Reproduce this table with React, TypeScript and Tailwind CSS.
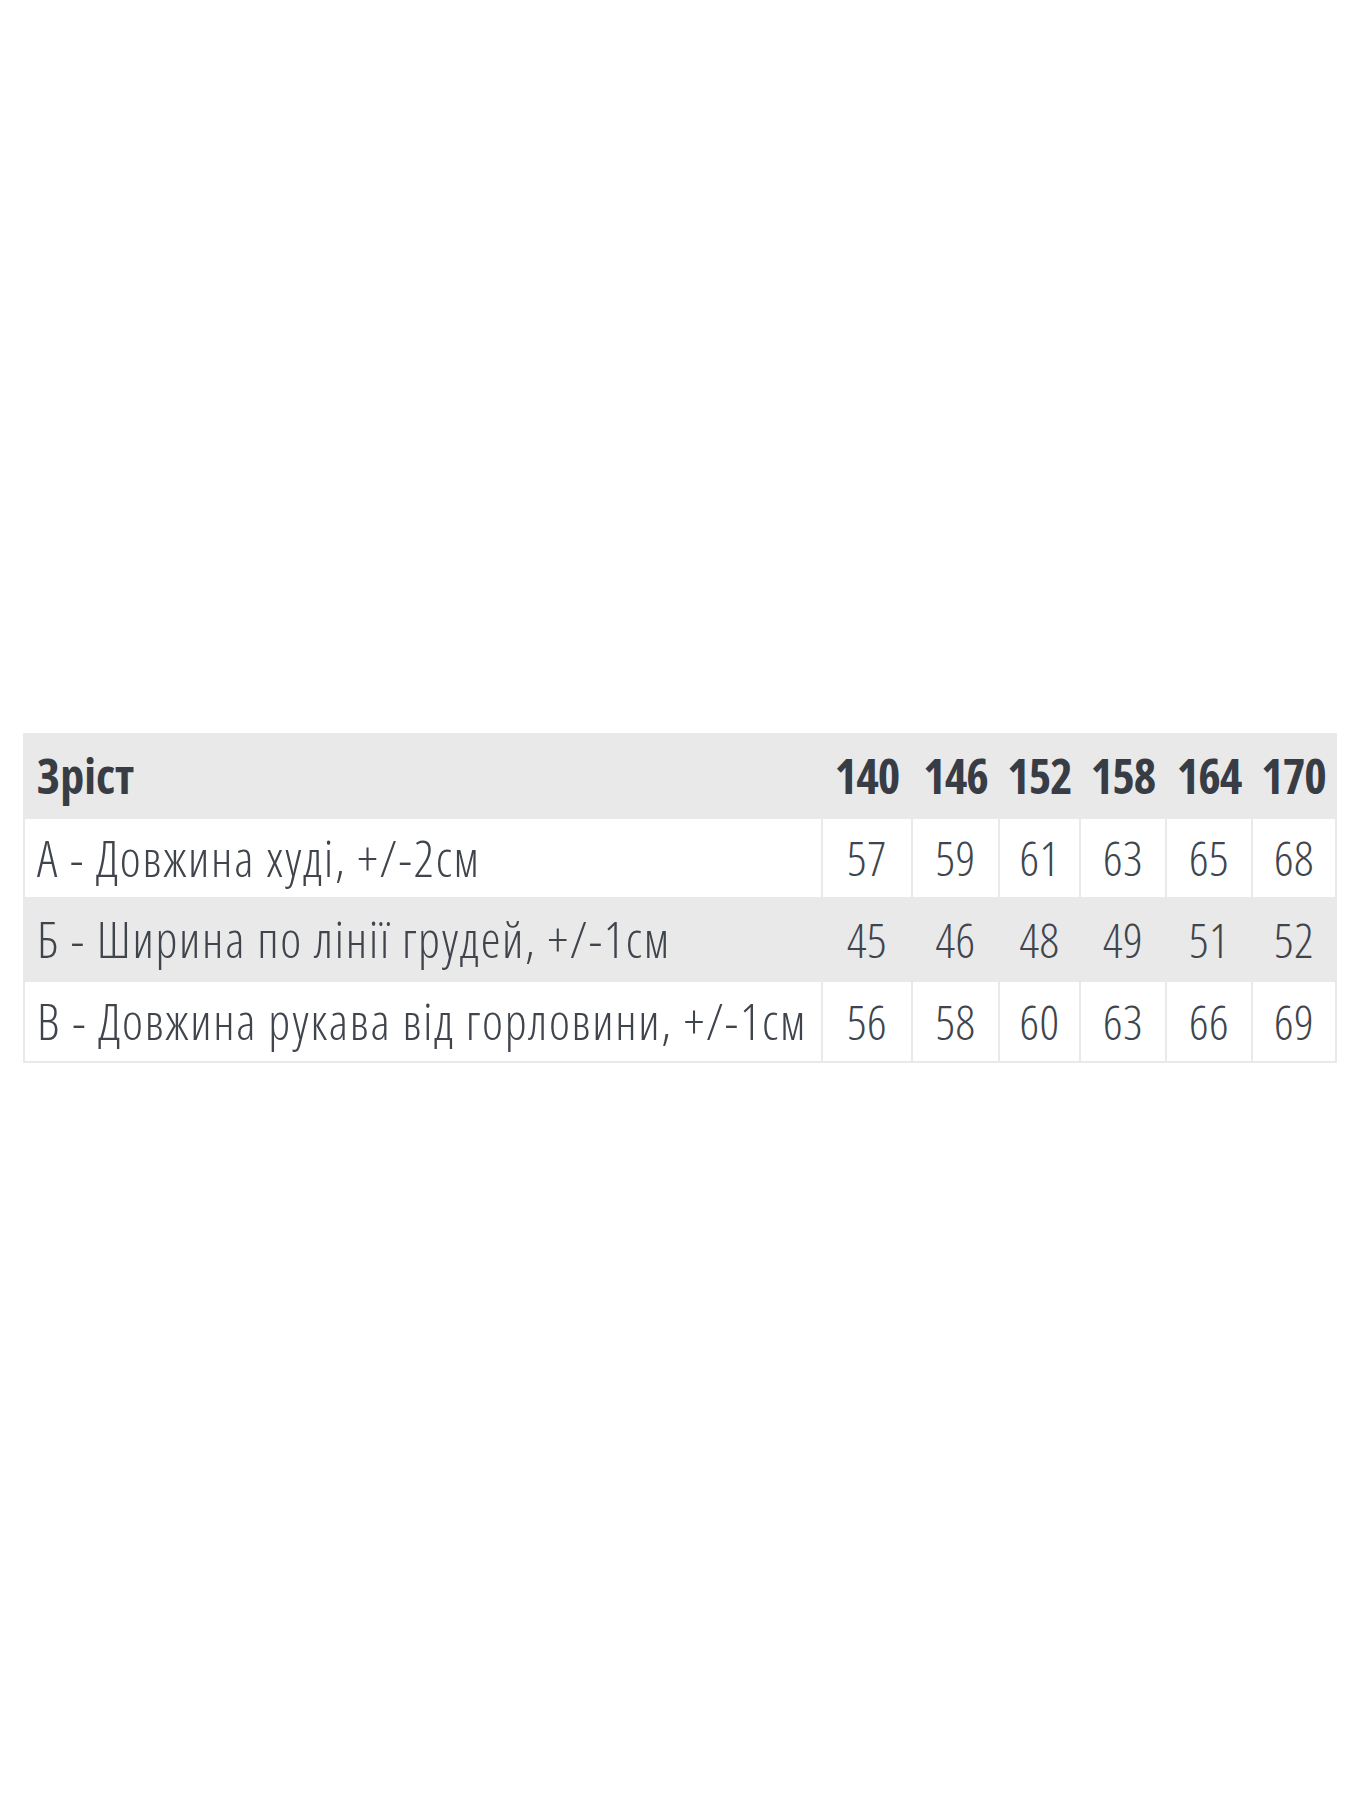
import React from "react";

const rows = [
  { label: "А - Довжина худі, +/-2см", vals: ["57", "59", "61", "63", "65", "68"], gray: false, h: "h-[80px]" },
  { label: "Б - Ширина по лінії грудей, +/-1см", vals: ["45", "46", "48", "49", "51", "52"], gray: true, h: "h-[83px]" },
  { label: "В - Довжина рукава від горловини, +/-1см", vals: ["56", "58", "60", "63", "66", "69"], gray: false, h: "h-[81px]" },
];

const heads = ["140", "146", "152", "158", "164", "170"];

export default function App() {
  return (
    <div className="min-h-[1800px] w-[1350px] bg-white pt-[733px] pl-[23px]" style={{ fontFamily: '"Open Sans", "Noto Sans", sans-serif' }}>
      <table className="w-[1312px] table-fixed border-collapse border-2 border-[#e9e9e9] text-[#40454d]">
        <colgroup>
          <col className="w-[798px]" />
          <col className="w-[90px]" />
          <col className="w-[87px]" />
          <col className="w-[81px]" />
          <col className="w-[86px]" />
          <col className="w-[86px]" />
          <col className="w-[84px]" />
        </colgroup>
        <thead>
          <tr className="h-[84px] bg-[#e9e9e9]">
            <th className="pl-[12px] text-left text-[48px] font-bold font-stretch-75% text-[#383c44]">Зріст</th>
            {heads.map((h) => (
              <th key={h} className="text-center text-[48px] font-bold font-stretch-75% tracking-[-1px] text-[#383c44]">{h}</th>
            ))}
          </tr>
        </thead>
        <tbody>
          {rows.map((r, i) => (
            <tr key={i} className={`${r.gray ? "bg-[#e9e9e9]" : "bg-white"} ${r.h}`}>
              <td className="border-2 border-[#e9e9e9] pl-[12px] text-left text-[50px] font-light font-stretch-75% tracking-[1.7px] whitespace-nowrap">{r.label}</td>
              {r.vals.map((v, j) => (
                <td key={j} className="border-2 border-[#e9e9e9] text-center text-[48px] font-light font-stretch-75% tracking-[0.5px]">{v}</td>
              ))}
            </tr>
          ))}
        </tbody>
      </table>
    </div>
  );
}
